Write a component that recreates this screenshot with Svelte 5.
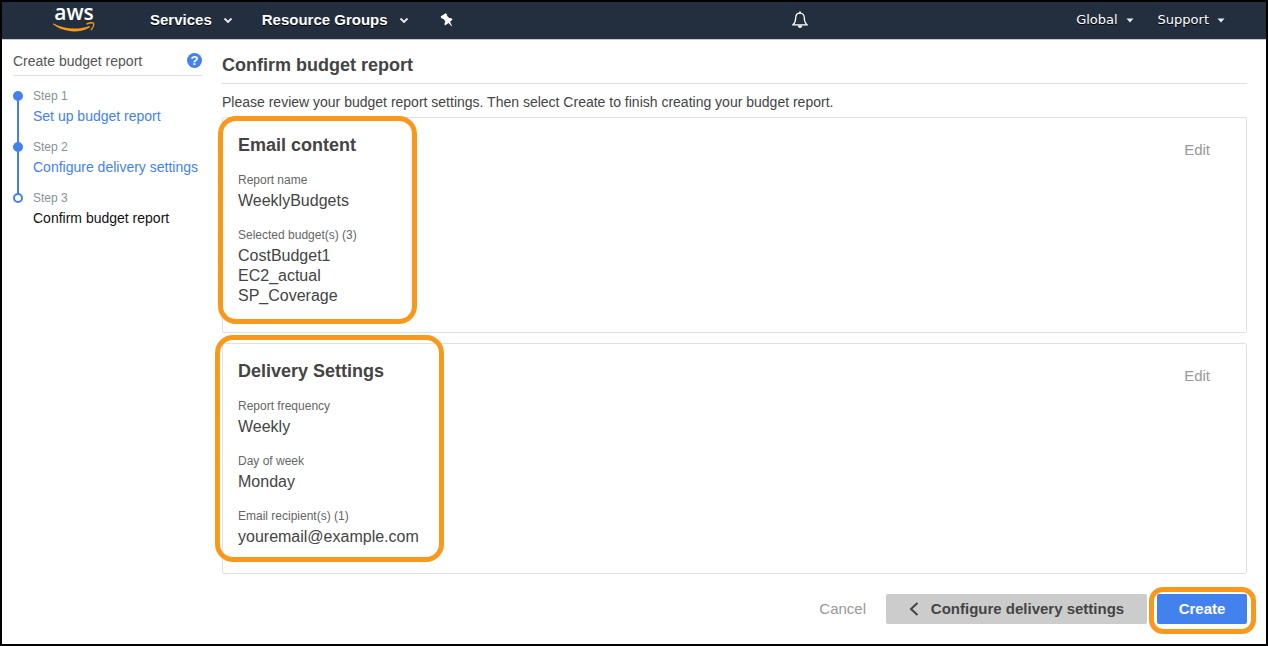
<script>
  const steps = [
    { label: 'Step 1', title: 'Set up budget report', done: true },
    { label: 'Step 2', title: 'Configure delivery settings', done: true },
    { label: 'Step 3', title: 'Confirm budget report', done: false }
  ];

  const cards = [
    {
      title: 'Email content',
      kind: 'email',
      fields: [
        { label: 'Report name', values: ['WeeklyBudgets'] },
        { label: 'Selected budget(s) (3)', values: ['CostBudget1', 'EC2_actual', 'SP_Coverage'] }
      ]
    },
    {
      title: 'Delivery Settings',
      kind: 'delivery',
      fields: [
        { label: 'Report frequency', values: ['Weekly'] },
        { label: 'Day of week', values: ['Monday'] },
        { label: 'Email recipient(s) (1)', values: ['youremail@example.com'] }
      ]
    }
  ];
</script>

<div class="frame">
  <header class="topbar">
    <a class="logo" href="#home">
      <span>aws</span>
      <svg width="42" height="11" viewBox="0 0 42 11" aria-hidden="true">
        <path d="M.6 1.600C11 7.300 25 8 35.800 4.200c1.200-.4 1.700.6.7 1.300C27 11.300 10.500 10.800.3 2.600c-.6-.6-.2-1.300.3-1z" fill="#f8991d" />
        <path d="M34 1.900c2-.9 5.500-1.200 6.500-.7.500 1.200-.4 4.400-2.100 6.400" fill="none" stroke="#f8991d" stroke-width="1.400" stroke-linecap="round" stroke-linejoin="round" />
      </svg>
    </a>
    <nav class="main-nav">
      <button type="button">Services
        <svg width="10" height="7" viewBox="0 0 10 7" aria-hidden="true"><path d="M1.500 1.500L5 5l3.500-3.500" fill="none" stroke="#e8eaed" stroke-width="1.800" /></svg>
      </button>
      <button type="button">Resource Groups
        <svg width="10" height="7" viewBox="0 0 10 7" aria-hidden="true"><path d="M1.500 1.500L5 5l3.500-3.500" fill="none" stroke="#e8eaed" stroke-width="1.800" /></svg>
      </button>
      <button type="button" class="pin" aria-label="Pin shortcuts">
        <svg width="13" height="14" viewBox="0 0 13 14" aria-hidden="true">
          <path d="M.6 3.600L5.600.2l1.700 1.500-.4 1.100 2.300 2.300c1.500-.3 2.600.2 3.400 1.500L10.100 8.800l1.900 4.200-.5.300-2.900-3.400-3.700 2.500c-.6-1.500-.4-2.900.5-4L3.400 5.700l-1.500.1z" fill="#fff" />
        </svg>
      </button>
    </nav>
    <button type="button" class="bell" aria-label="Notifications">
      <svg width="18" height="18" viewBox="0 0 18 18" aria-hidden="true">
        <path d="M9 2.200c-3 0-4.300 2.200-4.300 4.800 0 3.900-1 5.300-3 6.900h14.600c-2-1.600-3-3-3-6.900 0-2.600-1.300-4.800-4.300-4.800z" fill="none" stroke="#fff" stroke-width="1.300" stroke-linejoin="round" />
        <path d="M9 .6v1.600" stroke="#fff" stroke-width="1.600" />
        <path d="M6.600 14.500h4.800c-.3 1.600-1.100 2.400-2.400 2.400s-2.100-.8-2.400-2.400z" fill="#fff" />
      </svg>
    </button>
    <nav class="side-nav">
      <button type="button">Global
        <svg width="8" height="5" viewBox="0 0 8 5" aria-hidden="true"><path d="M.5.500h7L4 4.500z" fill="#e8eaed" /></svg>
      </button>
      <button type="button">Support
        <svg width="8" height="5" viewBox="0 0 8 5" aria-hidden="true"><path d="M.5.500h7L4 4.500z" fill="#e8eaed" /></svg>
      </button>
    </nav>
  </header>

  <div class="body">
    <aside>
      <div class="aside-head">
        <span>Create budget report</span>
        <button type="button" class="help" aria-label="Help">?</button>
      </div>
      <ol>
        {#each steps as step}
          <li class:done={step.done}>
            <small>{step.label}</small>
            {#if step.done}
              <a href="#step">{step.title}</a>
            {:else}
              <span>{step.title}</span>
            {/if}
          </li>
        {/each}
      </ol>
    </aside>

    <main>
      <h1>Confirm budget report</h1>
      <p class="intro">Please review your budget report settings. Then select Create to finish creating your budget report.</p>
      {#each cards as card}
        <section class="card {card.kind}">
          <div>
            <h2>{card.title}</h2>
            <dl>
              {#each card.fields as field}
                <div>
                  <dt>{field.label}</dt>
                  {#each field.values as value}<dd>{value}</dd>{/each}
                </div>
              {/each}
            </dl>
          </div>
          <button type="button" class="plain">Edit</button>
        </section>
      {/each}
      <footer>
        <button type="button" class="plain">Cancel</button>
        <button type="button" class="back">
          <svg width="10" height="14" viewBox="0 0 10 14" aria-hidden="true"><path d="M8.500 1L2 7l6.500 6" fill="none" stroke="#444" stroke-width="2" /></svg>
          Configure delivery settings
        </button>
        <div class="create-wrap"><button type="button" class="create">Create</button></div>
      </footer>
    </main>
  </div>
</div>

<style>
  :global(body) { margin: 0; background: #fff; }
  .frame, .frame *, .frame *::before, .frame *::after { box-sizing: border-box; }
  .frame {
    min-height: 100vh;
    border: 2px solid #000;
    font: 14px/20px "Liberation Sans", Arial, sans-serif;
    color: #444;
  }
  button { border: 0; margin: 0; padding: 0; background: none; font: inherit; color: inherit; cursor: pointer; }
  a { color: #4382ee; text-decoration: none; }

  .topbar {
    display: grid;
    grid-template-columns: 1fr auto 1fr;
    align-items: center;
    position: relative;
    height: 38px;
    padding-bottom: 1px;
    background: #232f3e;
    border-bottom: 1px solid #c5c8cc;
    color: #fff;
  }
  .topbar button { display: flex; align-items: center; text-shadow: 0 1px 0 #000; }
  .logo {
    position: absolute;
    left: 51px;
    top: 1px;
    display: flex;
    flex-direction: column;
    align-items: center;
    color: #fff;
    font: 600 21px/19px "Open Sans", "Noto Sans", sans-serif;
  }
  .main-nav { display: flex; gap: 29px; padding-left: 148px; font-weight: bold; font-size: 15px; white-space: nowrap; }
  .main-nav button { gap: 11px; }
  .main-nav .pin { padding-left: 2px; }
  .side-nav { display: flex; justify-content: flex-end; gap: 24px; padding-right: 41px; font: 13px/20px "DejaVu Sans", Verdana, sans-serif; }
  .side-nav button { gap: 8px; }
  .bell { margin-right: -332px; justify-self: center; }

  .body { display: grid; grid-template-columns: 189px minmax(0, 1fr); gap: 20px; padding: 11px 19px 20px 11px; }
  .aside-head {
    display: flex;
    align-items: center;
    justify-content: space-between;
    height: 25px;
    padding-bottom: 5px;
    border-bottom: 1px solid #e1e1e1;
    color: #555;
  }
  .help {
    width: 15px;
    height: 15px;
    border-radius: 50%;
    background: #4382ee;
    color: #fff;
    font: bold 13px/15px "Liberation Sans", Arial, sans-serif;
    text-align: center;
  }
  ol { list-style: none; margin: 10px 0 0; padding: 0; }
  li { position: relative; display: flex; flex-direction: column; height: 51px; padding-left: 20px; white-space: nowrap; }
  li small { font-size: 12px; color: #879196; }
  li span { color: #111; }
  li::before {
    content: "";
    position: absolute;
    left: 0;
    top: 5px;
    z-index: 1;
    width: 10px;
    height: 10px;
    border: 2px solid #4382ee;
    border-radius: 50%;
    background: #fff;
  }
  li.done::before { background: #4382ee; }
  li.done::after { content: ""; position: absolute; left: 4px; top: 10px; width: 2px; height: 51px; background: #4382ee; }

  h1 { margin: 0; height: 33px; padding-top: 4px; border-bottom: 1px solid #e1e1e1; font-size: 18px; line-height: 20px; }
  .intro { margin: 8px 0 5px; }
  .card {
    display: flex;
    justify-content: space-between;
    align-items: flex-start;
    position: relative;
    margin-bottom: 10px;
    padding: 17px 36px 26px 15px;
    border: 1px solid #e1e1e1;
    border-radius: 2px;
  }
  .card::after, .create-wrap::after {
    content: "";
    position: absolute;
    border: 5px solid #f8991d;
    pointer-events: none;
  }
  .card.email::after { left: -5px; top: -2px; width: 199px; bottom: 8px; border-radius: 18px; }
  .card.delivery::after { left: -8px; top: -9px; width: 229px; bottom: 11px; border-radius: 18px; }
  .card .plain { margin-top: 5px; }
  h2 { margin: 0 0 15px; font-size: 18px; line-height: 20px; }
  dl { display: grid; gap: 14px; margin: 0; }
  dt { margin-bottom: 1px; font-size: 12px; color: #666; }
  dd { margin: 0; font-size: 16px; }
  .plain { font-size: 15px; color: #999; }

  footer { display: flex; justify-content: flex-end; align-items: center; gap: 10px; padding-top: 10px; font-size: 15px; }
  footer .plain { margin-right: 10px; }
  .back, .create { display: flex; align-items: center; justify-content: center; height: 30px; border-radius: 2px; font-weight: bold; }
  .back { gap: 12px; min-width: 261px; background: #ccc; }
  .create { width: 90px; background: #4382ee; color: #fff; }
  .create-wrap { position: relative; }
  .create-wrap::after { inset: -7px -9px -10px -8px; border-radius: 14px; }
</style>
